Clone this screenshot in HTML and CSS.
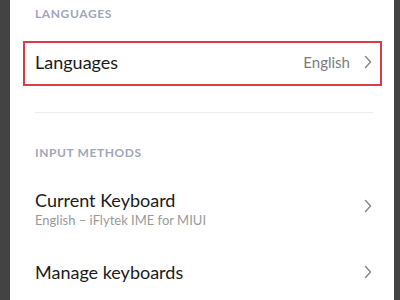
FILE: index.html
```html
<!DOCTYPE html>
<html>
    <head>
        <meta charset="UTF-8">
        <meta name="viewport" content="width=device-width, initial-scale=1.0">
        <title>Languages &amp; input</title>
        <link rel="stylesheet" href="styles.css">
    </head>
    <body>
        <div class="screen">
            <div class="section-title first">LANGUAGES</div>
            <div class="row highlighted">
                <span class="row-label">Languages</span>
                <span class="row-value">English</span>
                <svg class="chevron" viewBox="0 0 8 14" width="8" height="14">
                    <path d="M1.5 1.5 L6.5 7 L1.5 12.5" fill="none" stroke="#8a8a8a" stroke-width="1.5" stroke-linecap="round" stroke-linejoin="round"/>
                </svg>
            </div>
            <div class="divider"></div>
            <div class="section-title">INPUT METHODS</div>
            <div class="row double">
                <div class="row-text">
                    <span class="row-label">Current Keyboard</span>
                    <span class="row-sub">English – iFlytek IME for MIUI</span>
                </div>
                <svg class="chevron" viewBox="0 0 8 14" width="8" height="14">
                    <path d="M1.5 1.5 L6.5 7 L1.5 12.5" fill="none" stroke="#8a8a8a" stroke-width="1.5" stroke-linecap="round" stroke-linejoin="round"/>
                </svg>
            </div>
            <div class="row">
                <span class="row-label">Manage keyboards</span>
                <svg class="chevron" viewBox="0 0 8 14" width="8" height="14">
                    <path d="M1.5 1.5 L6.5 7 L1.5 12.5" fill="none" stroke="#8a8a8a" stroke-width="1.5" stroke-linecap="round" stroke-linejoin="round"/>
                </svg>
            </div>
        </div>
    </body>
</html>
```
FILE: styles.css
```css
*{
    margin: 0;
    padding: 0;
    box-sizing: border-box;
    font-family: Lato, "Noto Sans", sans-serif;
}
body{
    background-color: #434343;
    height: 300px;
    overflow: hidden;
    display: flex;
}
.screen{
    margin-left: 10px;
    width: 384px;
    height: 300px;
    background-color: #ffffff;
    display: flex;
    flex-direction: column;
}
.section-title{
    padding-left: 25px;
    font-size: 12px;
    line-height: 14px;
    letter-spacing: 0.6px;
    font-weight: 700;
    color: #a0a6bb;
    margin-top: 33px;
    margin-bottom: 26px;
}
.section-title.first{
    margin-top: 7px;
    margin-bottom: 20px;
}
.row{
    display: flex;
    align-items: center;
    padding-left: 25px;
    padding-right: 22px;
    height: 40px;
}
.row.highlighted{
    margin: 0 12px 0 13px;
    padding-left: 10px;
    padding-right: 8px;
    padding-bottom: 3px;
    height: 45px;
    border: 2px solid #dc3b45;
}
.row-label{
    font-size: 18px;
    color: #1b1b1b;
    flex: 1;
}
.row-value{
    font-size: 15px;
    color: #7c7c7c;
    margin-right: 14px;
}
.row-text{
    flex: 1;
    display: flex;
    flex-direction: column;
}
.row-sub{
    font-size: 13px;
    color: #9a9a9a;
    margin-top: 1px;
}
.row.double{
    height: 44px;
    margin-bottom: 22px;
}
.row.double .chevron{
    margin-top: -4px;
}
.divider{
    height: 1px;
    background-color: #ececec;
    margin: 26px 21px 0 25px;
}
```
